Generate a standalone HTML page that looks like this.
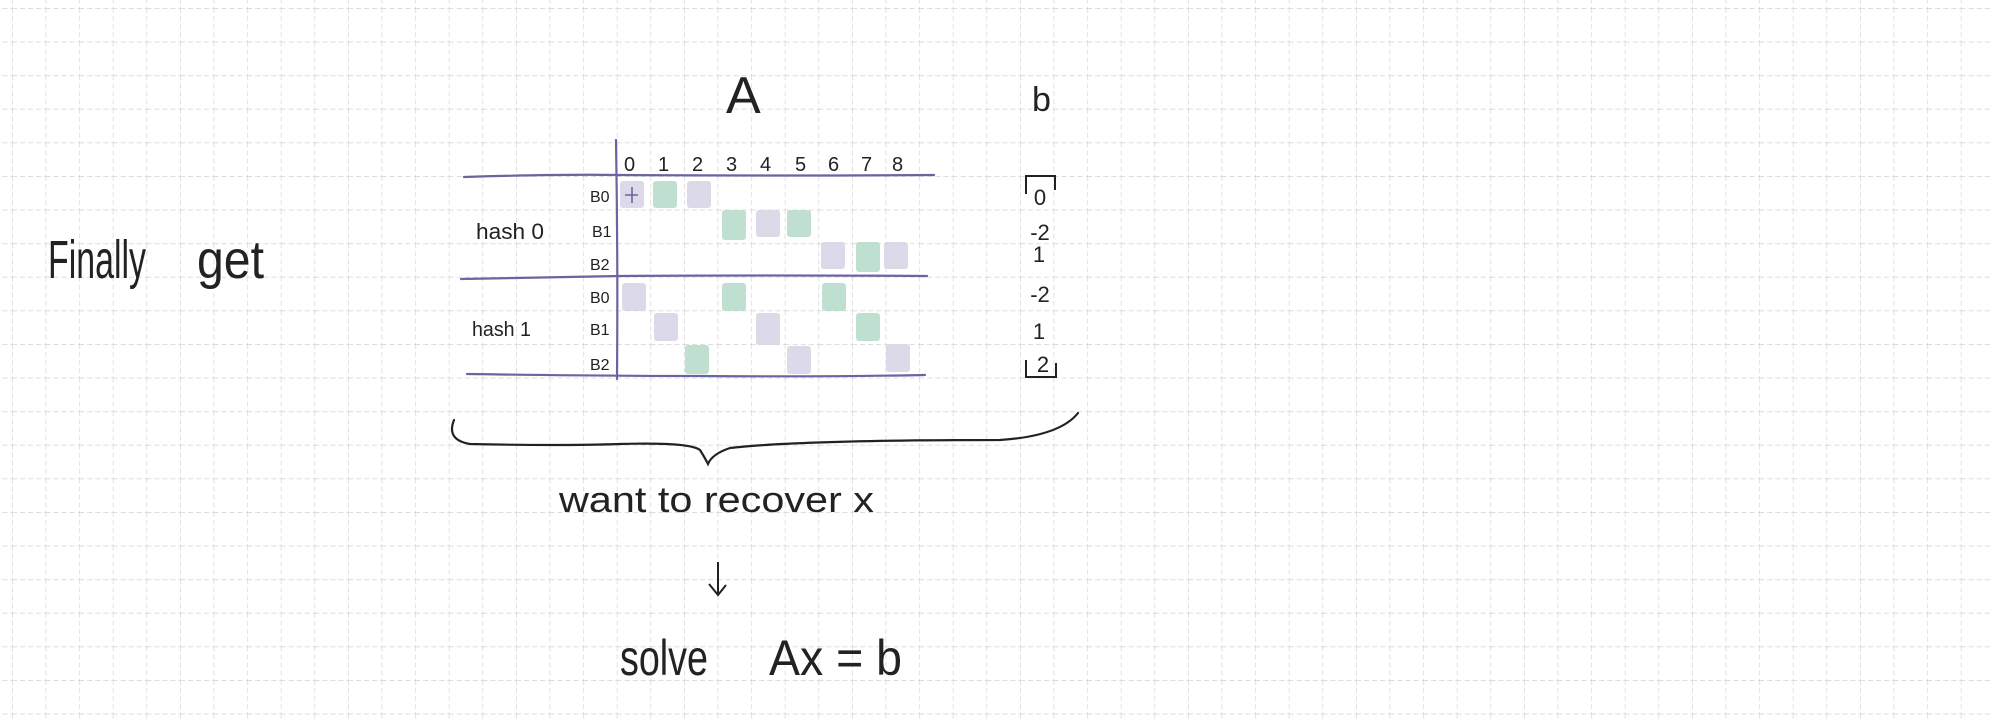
<!DOCTYPE html>
<html><head><meta charset="utf-8"><style>
html,body{margin:0;padding:0;background:#fff;width:1992px;height:720px;overflow:hidden}
svg text{font-family:"Liberation Sans",sans-serif;fill:#222}
</style></head><body>
<svg width="1992" height="720" viewBox="0 0 1992 720" xmlns="http://www.w3.org/2000/svg">
<defs>
<pattern id="g" x="12" y="8" width="33.6" height="33.6" patternUnits="userSpaceOnUse">
<path d="M0 0H33.6M0 0V33.6" stroke="#d4d4d4" stroke-width="1.4" stroke-dasharray="5 3" fill="none"/>
</pattern>
</defs>
<rect width="1992" height="720" fill="#fff"/>
<rect width="1992" height="720" fill="url(#g)"/>

<g opacity="0.85">
<rect x="620" y="181" width="24" height="27" rx="3" fill="#d6d4e6"/>
<rect x="653" y="181" width="24" height="27" rx="3" fill="#b5dbc9"/>
<rect x="687" y="181" width="24" height="27" rx="3" fill="#d6d4e6"/>
<rect x="722" y="210" width="24" height="30" rx="3" fill="#b5dbc9"/>
<rect x="756" y="210" width="24" height="27" rx="3" fill="#d6d4e6"/>
<rect x="787" y="210" width="24" height="27" rx="3" fill="#b5dbc9"/>
<rect x="821" y="242" width="24" height="27" rx="3" fill="#d6d4e6"/>
<rect x="856" y="242" width="24" height="30" rx="3" fill="#b5dbc9"/>
<rect x="884" y="242" width="24" height="27" rx="3" fill="#d6d4e6"/>
<rect x="622" y="283" width="24" height="28" rx="3" fill="#d6d4e6"/>
<rect x="722" y="283" width="24" height="28" rx="3" fill="#b5dbc9"/>
<rect x="822" y="283" width="24" height="28" rx="3" fill="#b5dbc9"/>
<rect x="654" y="313" width="24" height="28" rx="3" fill="#d6d4e6"/>
<rect x="756" y="313" width="24" height="32" rx="3" fill="#d6d4e6"/>
<rect x="856" y="313" width="24" height="28" rx="3" fill="#b5dbc9"/>
<rect x="685" y="345" width="24" height="29" rx="3" fill="#b5dbc9"/>
<rect x="787" y="346" width="24" height="28" rx="3" fill="#d6d4e6"/>
<rect x="886" y="344" width="24" height="28" rx="3" fill="#d6d4e6"/>
</g>
<path d="M632 187v16M625 195h13" stroke="#6a65a0" stroke-width="1.6"/>

<g stroke="#6a65a0" stroke-width="2.2" fill="none" stroke-linecap="round">
<path d="M616 140 Q618 260 617 379"/>
<path d="M464 177 Q560 174 620 175 Q780 176 934 175"/>
<path d="M461 279 Q560 277 620 276 Q780 275 927 276"/>
<path d="M467 374 Q600 376 700 376 Q820 377 925 375"/>
</g>

<g font-size="20">
<text x="624" y="171">0</text><text x="658" y="171">1</text><text x="692" y="171">2</text>
<text x="726" y="171">3</text><text x="760" y="171">4</text><text x="795" y="171">5</text>
<text x="828" y="171">6</text><text x="861" y="171">7</text><text x="892" y="171">8</text>
</g>
<g font-size="16">
<text x="590" y="202">B0</text><text x="592" y="237">B1</text><text x="590" y="270">B2</text>
<text x="590" y="303">B0</text><text x="590" y="335">B1</text><text x="590" y="370">B2</text>
</g>
<text x="476" y="239" font-size="22" textLength="68" lengthAdjust="spacingAndGlyphs">hash 0</text>
<text x="472" y="336" font-size="20" textLength="59" lengthAdjust="spacingAndGlyphs">hash 1</text>

<text x="726" y="113" font-size="52">A</text>
<text x="1032" y="111" font-size="34">b</text>

<path d="M1026 194V176H1055V190M1026 360V377H1056V363" stroke="#222" stroke-width="2" fill="none"/>
<g font-size="22" text-anchor="middle">
<text x="1040" y="205">0</text><text x="1040" y="240">-2</text><text x="1039" y="262">1</text>
<text x="1040" y="302">-2</text><text x="1039" y="339">1</text><text x="1043" y="372">2</text>
</g>

<text x="48" y="278" font-size="54" textLength="98" lengthAdjust="spacingAndGlyphs">Finally</text>
<text x="197" y="278" font-size="54" textLength="67" lengthAdjust="spacingAndGlyphs">get</text>

<path d="M454 420 Q446 440 470 444 Q560 446 620 444 Q690 442 700 450 Q705 458 708 464 Q712 454 730 448 Q800 440 1000 440 Q1060 436 1078 413" stroke="#222" stroke-width="2.2" fill="none" stroke-linecap="round"/>

<text x="559" y="512" font-size="36" textLength="315" lengthAdjust="spacingAndGlyphs">want to recover x</text>
<path d="M718 562V594M709 584L718 595L726 585" stroke="#222" stroke-width="2" fill="none"/>
<text x="620" y="675" font-size="50" textLength="88" lengthAdjust="spacingAndGlyphs">solve</text>
<text x="769" y="675" font-size="50" textLength="133" lengthAdjust="spacingAndGlyphs">Ax = b</text>
</svg>
</body></html>
